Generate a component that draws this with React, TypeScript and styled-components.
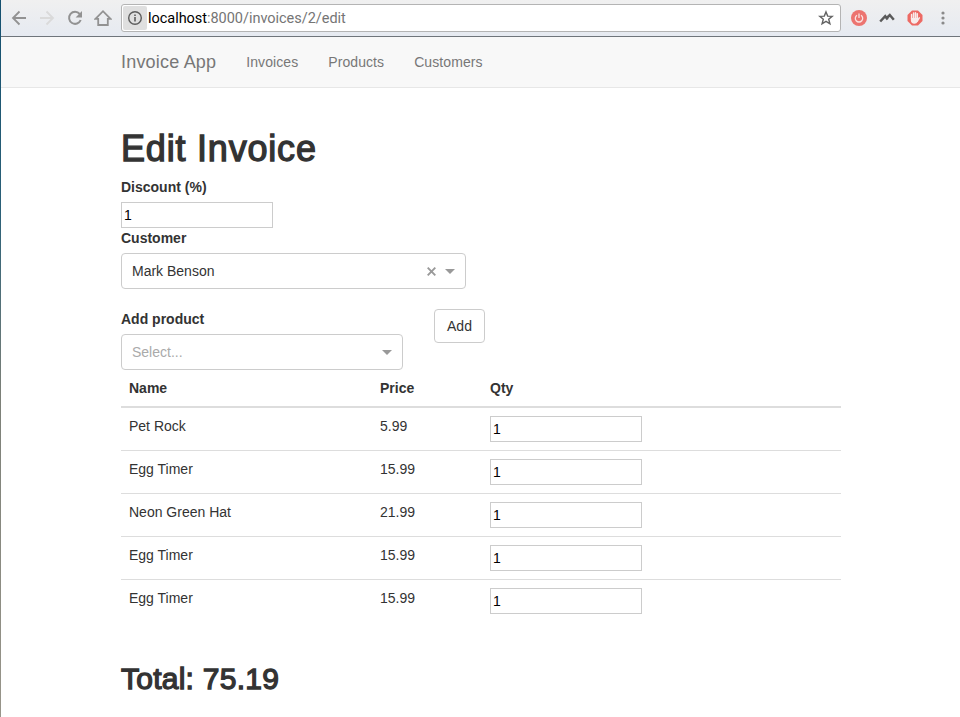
import React from "react";
import styled, { createGlobalStyle } from "styled-components";

const GlobalStyle = createGlobalStyle`
  * { box-sizing: border-box; }
  html, body { margin: 0; padding: 0; background: #fff; }
  body {
    font: 14px/20px "Liberation Sans", Arial, sans-serif;
    color: #333;
    overflow: hidden;
  }
`;

const Window = styled.div`
  display: flex;
  width: 960px;
  height: 717px;
  background: #fff;
`;

const DesktopEdge = styled.div`
  flex: 0 0 1px;
  background: linear-gradient(#14506f, #2c6178 30%, #7c8078 55%, #98958a);
`;

const Browser = styled.div`
  flex: 1;
  min-width: 0;
`;

const Toolbar = styled.div`
  display: flex;
  align-items: center;
  height: 37px;
  padding-left: 7px;
  background: linear-gradient(#f0f0f0, #e6eaf1);
  border-bottom: 1px solid #6f757b;
`;

const ToolSlot = styled.span`
  display: flex;
  align-items: center;
  justify-content: center;
  flex: 0 0 28px;
  height: 28px;
`;

const BackSlots = styled.div`
  display: flex;
  margin-left: -3px;
  width: 116px;
`;

const AddressBar = styled.div`
  display: flex;
  align-items: center;
  width: 720px;
  height: 28px;
  padding: 0 6px 0 1px;
  background: #fff;
  border: 1px solid #b4b4b4;
  border-radius: 3px;
`;

const InfoBox = styled.span`
  display: flex;
  align-items: center;
  justify-content: center;
  width: 24px;
  height: 24px;
  border-radius: 2px;
  background: #dfdfdf;
`;

const Url = styled.span`
  flex: 1;
  padding: 2px 0 0 1px;
  font: 14.5px/20px Roboto, sans-serif;
  letter-spacing: -0.03px;
  color: #757575;
  white-space: nowrap;
`;

const Host = styled.span`
  color: #000;
`;

const Extensions = styled.div`
  display: flex;
  padding-left: 4px;
`;

const Navbar = styled.nav`
  display: flex;
  align-items: center;
  gap: 30px;
  height: 51px;
  padding: 0 0 1px 120px;
  background: #f8f8f8;
  border-bottom: 1px solid #e7e7e7;
  color: #777;
`;

const Brand = styled.span`
  font-size: 18px;
  letter-spacing: 0.2px;
`;

const NavLink = styled.span`
  font-size: 14px;
  letter-spacing: 0.08px;
`;

const Page = styled.main`
  width: 720px;
  margin: 41px 0 0 120px;
`;

const Heading = styled.h1<{ $size: number; $spacing: number }>`
  margin: 0;
  font-size: ${(p) => p.$size}px;
  line-height: 1.1;
  font-weight: 400;
  letter-spacing: ${(p) => p.$spacing}px;
  -webkit-text-stroke: 1.3px #333;
`;

const Title = styled(Heading)`
  height: 40px;
  margin-bottom: 8px;
`;

const Total = styled(Heading)`
  margin-top: 40px;
`;

const Label = styled.label`
  display: block;
  height: 25px;
  font-weight: 700;
`;

const NumberInput = styled.input`
  display: block;
  width: 152px;
  height: 26px;
  margin: 0;
  padding: 1px 2px;
  border: 1px solid #ccc;
  border-radius: 0;
  background: #fff;
  color: #000;
  font: 14px/20px "Liberation Sans", Arial, sans-serif;
`;

const SelectBox = styled.div<{ $w: number; $empty?: boolean }>`
  display: flex;
  align-items: center;
  width: ${(p) => p.$w}px;
  height: 36px;
  padding: 0 10px;
  border: 1px solid #ccc;
  border-radius: 4px;
  color: ${(p) => (p.$empty ? "#aaa" : "#333")};
`;

const SelectText = styled.span`
  flex: 1;
`;

const Clear = styled.svg`
  margin-right: 9px;
`;

const AddRow = styled.div`
  display: flex;
  align-items: flex-start;
  gap: 31px;
  margin-top: 20px;
`;

const Button = styled.button`
  width: 51px;
  height: 34px;
  padding: 0;
  border: 1px solid #ccc;
  border-radius: 4px;
  background: #fff;
  color: #333;
  font: 14px/20px "Liberation Sans", Arial, sans-serif;
  letter-spacing: 0.1px;
`;

const Table = styled.table`
  width: 720px;
  table-layout: fixed;
  border-collapse: separate;
  border-spacing: 0;
`;

const Th = styled.th<{ $w?: number }>`
  width: ${(p) => (p.$w ? `${p.$w}px` : "auto")};
  padding: 8px;
  border-bottom: 2px solid #ddd;
  text-align: left;
`;

const Td = styled.td`
  padding: 8px;
  vertical-align: top;
  tr + tr > & {
    border-top: 1px solid #ddd;
  }
`;

const Arrow = () => (
  <svg width="10" height="5" viewBox="0 0 10 5">
    <path d="M0 0H10L5 5Z" fill="#999" />
  </svg>
);

const products = [
  { name: "Pet Rock", price: "5.99" },
  { name: "Egg Timer", price: "15.99" },
  { name: "Neon Green Hat", price: "21.99" },
  { name: "Egg Timer", price: "15.99" },
  { name: "Egg Timer", price: "15.99" },
];

export default function App() {
  return (
    <Window>
      <GlobalStyle />
      <DesktopEdge />
      <Browser>
        <Toolbar>
          <BackSlots>
            <ToolSlot>
              <svg width="16" height="16" viewBox="0 0 16 16" fill="none" stroke="#929292" strokeWidth="1.8">
                <path d="M15 8H2M8.5 1.5L2 8L8.5 14.5" />
              </svg>
            </ToolSlot>
            <ToolSlot>
              <svg width="16" height="16" viewBox="0 0 16 16" fill="none" stroke="#dadada" strokeWidth="1.8">
                <path d="M1 8H14M7.5 1.5L14 8L7.5 14.5" />
              </svg>
            </ToolSlot>
            <ToolSlot>
              <svg width="16" height="16" viewBox="0 0 16 16" fill="none">
                <path d="M12.7 4A6 6 0 1 0 13.7 10" stroke="#929292" strokeWidth="2" />
                <path d="M15 1V7.4H8.6Z" fill="#929292" />
              </svg>
            </ToolSlot>
            <ToolSlot>
              <svg width="18" height="18" viewBox="0 0 18 18" fill="none" stroke="#929292" strokeWidth="1.8">
                <path d="M1.5 9.8H4.2V16H13.8V9.8H16.5L9 2.2Z" />
              </svg>
            </ToolSlot>
          </BackSlots>
          <AddressBar>
            <InfoBox>
              <svg width="16" height="16" viewBox="0 0 16 16">
                <circle cx="8" cy="8" r="6.3" fill="none" stroke="#5c5c5c" strokeWidth="1.4" />
                <path d="M7.2 4.5H8.8V6H7.2ZM7.2 7.1H8.8V11.6H7.2Z" fill="#5c5c5c" />
              </svg>
            </InfoBox>
            <Url>
              <Host>localhost</Host>:8000/invoices/2/edit
            </Url>
            <svg width="16" height="16" viewBox="0 0 16 16">
              <path
                d="M8 1.9L9.7 6.1L14.2 6.4L10.7 9.3L11.9 13.8L8 11.3L4.1 13.8L5.3 9.3L1.8 6.4L6.3 6.1Z"
                fill="none"
                stroke="#626262"
                strokeWidth="1.4"
              />
            </svg>
          </AddressBar>
          <Extensions>
            <ToolSlot>
              <svg width="16" height="16" viewBox="0 0 16 16" fill="none">
                <circle cx="8" cy="8" r="8" fill="#ec7470" />
                <path d="M6 5.2A3.7 3.7 0 1 0 10 5.2M8 3.5V8" stroke="#fbe3e2" strokeWidth="1.3" />
              </svg>
            </ToolSlot>
            <ToolSlot>
              <svg width="16" height="16" viewBox="0 0 16 16" fill="none" stroke="#5a5a5a" strokeWidth="2.5">
                <path d="M1.2 11.5L6.2 6.2L8.7 9.5M7.2 8.5L10.8 5L14.8 9.7" />
              </svg>
            </ToolSlot>
            <ToolSlot>
              <svg width="16" height="16" viewBox="0 0 16 16">
                <path d="M5 .4H11L15.5 5V11L11 15.6H5L.5 11V5Z" fill="#ed6a64" />
                <path
                  d="M4.6 9V4.6M6.6 8V3.1M8.5 8V2.7M10.3 8.5V3.8M12.3 7.8L10.3 11"
                  fill="none"
                  stroke="#f8eceb"
                  strokeWidth="1.5"
                  strokeLinecap="round"
                />
                <path d="M3.9 8H11V11.2Q9.6 13.8 7.4 13.8Q3.9 13.6 3.9 10.5Z" fill="#f8eceb" />
              </svg>
            </ToolSlot>
            <ToolSlot>
              <svg width="4" height="14" viewBox="0 0 4 14" fill="#8a8a8a">
                <circle cx="2" cy="2" r="1.6" />
                <circle cx="2" cy="7" r="1.6" />
                <circle cx="2" cy="12" r="1.6" />
              </svg>
            </ToolSlot>
          </Extensions>
        </Toolbar>
        <Navbar>
          <Brand>Invoice App</Brand>
          <NavLink>Invoices</NavLink>
          <NavLink>Products</NavLink>
          <NavLink>Customers</NavLink>
        </Navbar>
        <Page>
          <Title $size={36} $spacing={0.8}>Edit Invoice</Title>
          <Label>Discount (%)</Label>
          <NumberInput defaultValue="1" />
          <Label>Customer</Label>
          <SelectBox $w={345}>
            <SelectText>Mark Benson</SelectText>
            <Clear width="9" height="9" viewBox="0 0 9 9" stroke="#999" strokeWidth="1.9">
              <path d="M.7 .7L8.3 8.3M8.3 .7L.7 8.3" />
            </Clear>
            <Arrow />
          </SelectBox>
          <AddRow>
            <div>
              <Label>Add product</Label>
              <SelectBox $w={282} $empty>
                <SelectText>Select...</SelectText>
                <Arrow />
              </SelectBox>
            </div>
            <Button>Add</Button>
          </AddRow>
          <Table>
            <thead>
              <tr>
                <Th $w={251}>Name</Th>
                <Th $w={110}>Price</Th>
                <Th>Qty</Th>
              </tr>
            </thead>
            <tbody>
              {products.map((p, i) => (
                <tr key={i}>
                  <Td>{p.name}</Td>
                  <Td>{p.price}</Td>
                  <Td>
                    <NumberInput defaultValue="1" />
                  </Td>
                </tr>
              ))}
            </tbody>
          </Table>
          <Total as="h2" $size={30} $spacing={0.25}>Total: 75.19</Total>
        </Page>
      </Browser>
    </Window>
  );
}
